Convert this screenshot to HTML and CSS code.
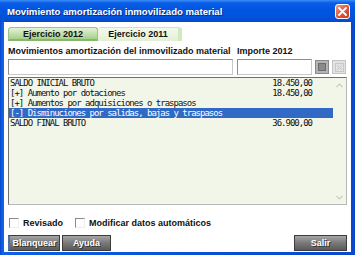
FILE: index.html
```html
<!DOCTYPE html>
<html lang="es">
  <head>
    <meta charset="UTF-8" />
    <meta name="viewport" content="width=device-width, initial-scale=1.0" />
    <title>Movimiento amortización inmovilizado material</title>
    <link rel="stylesheet" href="styles.css">
  </head>
  <body>
    <div class="window">
      <div class="titlebar">
        <span class="title">Movimiento amortización inmovilizado material</span>
        <span class="close-btn">
          <svg width="9" height="9" viewBox="0 0 9 9">
            <path d="M1 1 L8 8 M8 1 L1 8" stroke="#fff" stroke-width="1.8" stroke-linecap="round" />
          </svg>
        </span>
      </div>

      <div class="client">
        <div class="tabs">
          <div class="tab active">Ejercicio 2012</div>
          <div class="tab">Ejercicio 2011</div>
        </div>

        <div class="col-head">
          <span class="col-name">Movimientos amortización del inmovilizado material</span>
          <span class="col-amount">Importe 2012</span>
        </div>

        <div class="filters">
          <input class="filter-name" type="text" />
          <input class="filter-amount" type="text" />
          <span class="tool-btn"><span class="square"></span></span>
          <span class="tool-btn disabled">
            <svg width="9" height="9" viewBox="0 0 9 9">
              <rect x="0.5" y="0.5" width="8" height="8" fill="none" stroke="#c9c9c9" />
              <path d="M2 2 L7 7 M7 2 L2 7" stroke="#c9c9c9" stroke-width="1" />
            </svg>
          </span>
        </div>

        <div class="list">
          <div class="rows">
            <div class="row"><span class="label">SALDO INICIAL BRUTO</span><span class="amount">18.450,00</span></div>
            <div class="row"><span class="label">[+] Aumento por dotaciones</span><span class="amount">18.450,00</span></div>
            <div class="row"><span class="label">[+] Aumentos por adquisiciones o traspasos</span><span class="amount"></span></div>
            <div class="row selected"><span class="label">[-] Disminuciones por salidas, bajas y traspasos</span><span class="amount"></span></div>
            <div class="row"><span class="label">SALDO FINAL BRUTO</span><span class="amount">36.900,00</span></div>
          </div>
          <div class="scrollbar">
            <span class="arrow">
              <svg width="7" height="5" viewBox="0 0 7 5"><path d="M0.5 4 L3.5 1 L6.5 4" fill="none" stroke="#c8cfc0" stroke-width="1.2" /></svg>
            </span>
            <span class="arrow">
              <svg width="7" height="5" viewBox="0 0 7 5"><path d="M0.5 1 L3.5 4 L6.5 1" fill="none" stroke="#c8cfc0" stroke-width="1.2" /></svg>
            </span>
          </div>
        </div>

        <div class="checks">
          <label class="check"><span class="box"></span>Revisado</label>
          <label class="check"><span class="box"></span>Modificar datos automáticos</label>
        </div>

        <div class="buttons">
          <button class="btn focused">Blanquear</button>
          <button class="btn btn-help">Ayuda</button>
          <button class="btn btn-exit">Salir</button>
        </div>
      </div>
    </div>
  </body>
</html>
```

FILE: styles.css
```css
* {
  margin: 0;
  padding: 0;
  box-sizing: border-box;
}

body {
  font-family: "Liberation Sans", Arial, sans-serif;
  font-size: 9px;
  color: #111;
  background-color: #fff;
}

.window {
  width: 355px;
  height: 255px;
  display: flex;
  flex-direction: column;
  background: linear-gradient(to right, #0843c8, #1060e8 2px, #0a50d8 50%, #0a48d0);
}

/* title bar */
.titlebar {
  height: 22px;
  display: flex;
  align-items: center;
  justify-content: space-between;
  padding: 0 5px 0 7px;
  background: linear-gradient(#3c8cf8, #0a5ee6 3px, #0055e0 45%, #0052dc 80%, #0848c6);
}

.title {
  color: #fff;
  font-weight: bold;
  font-size: 9.6px;
  text-shadow: 1px 1px 0 #0a2c86;
}

.close-btn {
  width: 15px;
  height: 15px;
  display: flex;
  align-items: center;
  justify-content: center;
  border: 1px solid #fff;
  border-radius: 3px;
  background: linear-gradient(135deg, #f0a088, #e0583a 50%, #c73e1c);
}

/* client area */
.client {
  flex: 1;
  margin: 0 4px 3px;
  padding: 5px 4px 0;
  background-color: #fff;
  display: flex;
  flex-direction: column;
}

.tabs {
  display: flex;
  height: 14px;
}

.tab {
  height: 14px;
  line-height: 13px;
  font-weight: bold;
  text-align: center;
  border-radius: 3px 3px 0 0;
}

.tab.active {
  width: 90px;
  background: linear-gradient(#e4f2d8, #c0dea8 60%, #a8cf8c);
  border: 1px solid #9cc485;
  border-bottom: 2px solid #86b86a;
}

.tab:not(.active) {
  width: 84px;
  background: linear-gradient(#f4f9ee, #e2f0d5);
  border-top: 1px solid #cfe3bf;
  border-right: 4px solid #d2e8bf;
}

.col-head {
  display: flex;
  height: 13px;
  margin-top: 4px;
  line-height: 13px;
  font-weight: bold;
}

.col-name {
  width: 229px;
}

.filters {
  display: flex;
  align-items: center;
  height: 16px;
  margin-top: 1px;
}

.filters input {
  height: 16px;
  border: 1px solid #8e8e8e;
  border-right-color: #c8c8c8;
  border-bottom-color: #c8c8c8;
  background-color: #fff;
}

.filter-name {
  width: 225px;
}

.filter-amount {
  width: 75px;
  margin-left: 4px;
}

.tool-btn {
  width: 14px;
  height: 14px;
  margin-left: 3px;
  display: flex;
  align-items: center;
  justify-content: center;
  background-color: #b4b4b4;
  border: 1px solid #8a8a8a;
}

.tool-btn .square {
  width: 8px;
  height: 8px;
  background-color: #8a8a8a;
  border: 1px solid #6c6c6c;
}

.tool-btn.disabled {
  background-color: #e2e2e2;
  border-color: #c4c4c4;
}

/* list */
.list {
  height: 128px;
  margin-top: 2px;
  display: flex;
  border: 1px solid #6f6f6f;
  border-right-color: #b8b8b8;
  border-bottom-color: #b8b8b8;
  background-color: #f1f6e9;
}

.rows {
  flex: 1;
}

.row {
  display: flex;
  height: 10px;
  line-height: 10px;
  font-family: "DejaVu Sans Mono", monospace;
  font-size: 9px;
  letter-spacing: -1px;
  color: #111;
}

.row .label {
  flex: 1;
  padding-left: 1px;
  white-space: nowrap;
}

.row .amount {
  width: 80px;
  padding-right: 21px;
  text-align: right;
}

.row.selected {
  background-color: #316ac5;
  color: #fff;
}

.scrollbar {
  width: 13px;
  display: flex;
  flex-direction: column;
  justify-content: space-between;
  padding: 2px 0 1px;
}

.arrow {
  height: 11px;
  display: flex;
  align-items: center;
  justify-content: center;
}

/* checkboxes */
.checks {
  display: flex;
  height: 10px;
  margin-top: 13px;
  padding-left: 1px;
  font-weight: bold;
  line-height: 10px;
}

.check {
  display: flex;
  align-items: center;
  margin-right: 12px;
}

.check .box {
  width: 10px;
  height: 10px;
  margin-right: 4px;
  background-color: #fff;
  border: 1px solid #eee;
  border-top-color: #8a8a8a;
  border-left-color: #8a8a8a;
}

/* buttons */
.buttons {
  display: flex;
  height: 16px;
  margin-top: 7px;
}

.btn {
  height: 16px;
  font-family: "Liberation Sans", Arial, sans-serif;
  font-size: 9px;
  font-weight: bold;
  color: #fff;
  text-shadow: 1px 1px 0 #333;
  border: 1px solid #3c3c3c;
  background: linear-gradient(#a6a6a6, #7c7c7c 45%, #5a5a5a);
}

.btn.focused {
  width: 52px;
  border-left: 2px solid #4a6fb8;
}

.btn-help {
  width: 49px;
  margin-left: 2px;
}

.btn-exit {
  width: 53px;
  margin-left: auto;
}
```
